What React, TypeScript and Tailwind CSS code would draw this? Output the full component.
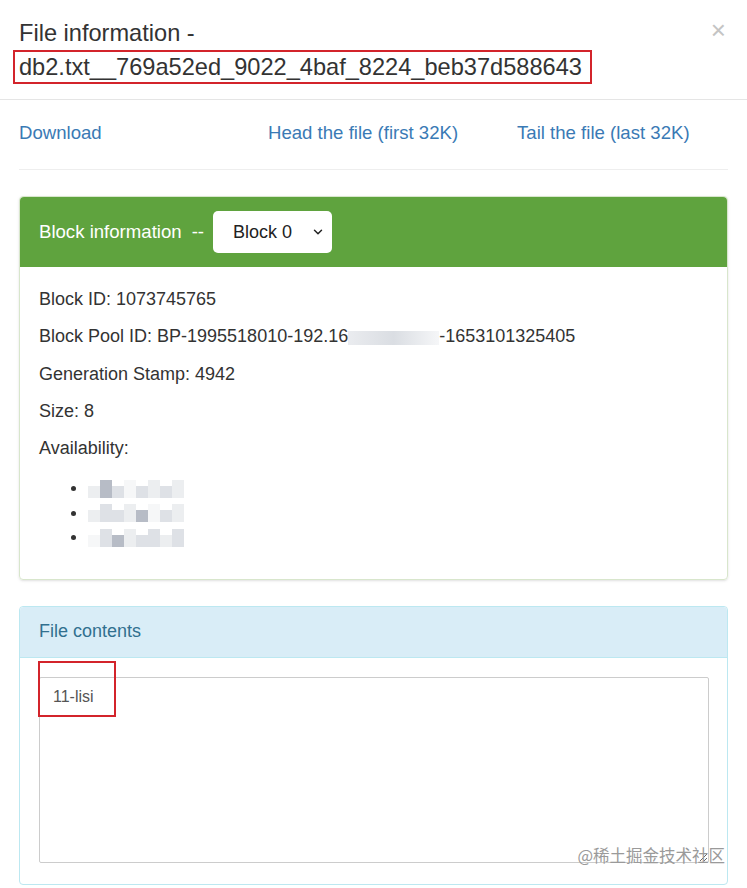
import React from 'react';
import { ChevronDown } from 'lucide-react';

const blurCells = [
  ['bg-gray-200', 'bg-gray-400', 'bg-gray-300', 'bg-gray-100', 'bg-gray-300', 'bg-gray-200', 'bg-gray-300', 'bg-gray-200'],
  ['bg-gray-200', 'bg-gray-300', 'bg-gray-300', 'bg-gray-200', 'bg-gray-400', 'bg-gray-100', 'bg-gray-300', 'bg-gray-200'],
  ['bg-gray-100', 'bg-gray-300', 'bg-gray-400', 'bg-gray-200', 'bg-gray-300', 'bg-gray-300', 'bg-gray-200', 'bg-gray-300'],
];

const Blurred: React.FC<{ row: number }> = ({ row }) => (
  <span className="inline-grid grid-cols-8 w-[96px] h-[18px] align-middle opacity-70">
    {blurCells[row].map((c, i) => (
      <span key={i} className={`${c} ${i % 2 === 0 ? 'mt-[6px]' : ''}`} />
    ))}
  </span>
);

const App: React.FC = () => {
  return (
    <div className="w-[747px] h-[888px] bg-white text-[#333] overflow-hidden font-['Liberation_Sans',Arial,sans-serif]">
      {/* modal header */}
      <div className="relative h-[100px] border-b border-[#e5e5e5] px-[19px] pt-[17px]">
        <h4 className="text-[23.6px] leading-[33px] text-[#333]">
          File information -
          <br />
          <span className="inline-block -ml-[6px] pl-[4px] pr-[8px] border-2 border-[#d3242b] leading-[30px]">
            db2.txt__769a52ed_9022_4baf_8224_beb37d588643
          </span>
        </h4>
        <button className="absolute right-[21px] top-[17px] text-[26px] leading-none text-[#c4c4c4]">×</button>
      </div>

      <div className="px-[19px]">
        {/* links */}
        <div className="grid grid-cols-[249px_249px_1fr] h-[70px] items-center pb-[3px] text-[18.6px] text-[#3a7ab5] border-b border-[#eee]">
          <a>Download</a>
          <a>Head the file (first 32K)</a>
          <a>Tail the file (last 32K)</a>
        </div>

        {/* block info */}
        <div className="mt-[26px] rounded-[4px] border border-[#d8e6cc] shadow-sm">
          <div className="h-[70px] flex items-center px-[19px] bg-[#5fa33e] rounded-t-[4px] text-white text-[18.6px]">
            <span>Block information</span>
            <span className="ml-[10px] mr-[9px]">--</span>
            <div className="flex items-center justify-between w-[119px] h-[42px] bg-white rounded-[5px] pl-[20px] pr-[7px] text-[#222] text-[18px]">
              <span>Block 0</span>
              <ChevronDown size={14} strokeWidth={2.5} />
            </div>
          </div>
          <div className="px-[19px] pt-[14px] pb-[30px] text-[18px] leading-[37.3px]">
            <p>Block ID: 1073745765</p>
            <p>
              Block Pool ID: BP-1995518010-192.16
              <span className="inline-block w-[91px] h-[14px] align-middle bg-gradient-to-r from-gray-200 via-gray-300 to-gray-100 opacity-80" />
              -1653101325405
            </p>
            <p>Generation Stamp: 4942</p>
            <p>Size: 8</p>
            <p>Availability:</p>
            <ul className="list-disc pl-[49px] mt-[8px] leading-[24.5px]">
              <li><Blurred row={0} /></li>
              <li><Blurred row={1} /></li>
              <li><Blurred row={2} /></li>
            </ul>
          </div>
        </div>

        {/* file contents */}
        <div className="mt-[26px] rounded-[4px] border border-[#bce8f1]">
          <div className="h-[51px] flex items-center px-[19px] bg-[#d9edf7] border-b border-[#bce8f1] rounded-t-[4px] text-[#31708f] text-[18px]">
            File contents
          </div>
          <div className="relative px-[19px] pt-[19px] pb-[21px]">
            <textarea
              readOnly
              value="11-lisi"
              className="block w-[670px] h-[186px] border border-[#ccc] rounded-[2px] px-[13px] py-[7px] text-[16px] text-[#555] font-['Liberation_Sans',Arial,sans-serif] resize-y outline-none"
            />
            <div className="absolute left-[18px] top-[3px] w-[78px] h-[56px] border-2 border-[#d3242b]" />
            <div className="absolute right-[2px] bottom-[16px] text-[16.5px] text-[#9a9a9a] font-['Noto_Sans_CJK_SC',sans-serif]">
              @稀土掘金技术社区
            </div>
          </div>
        </div>
      </div>
    </div>
  );
};

export default App;
